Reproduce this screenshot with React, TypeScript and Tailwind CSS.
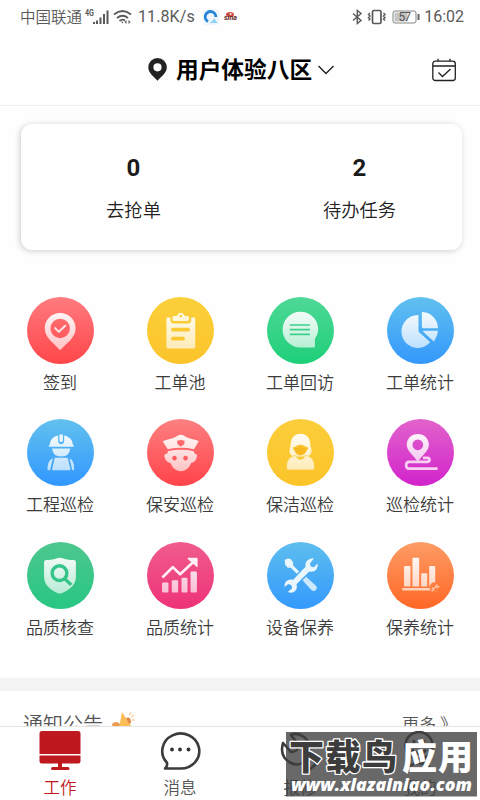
import type { ReactNode } from "react";

type Entry = {
  label: string;
  from: string;
  to: string;
  icon: ReactNode;
};

// Icons are drawn on a 200x200 grid, "url(#shine)" is the shared white fade
const entries: Entry[] = [
  {
    label: "签到",
    from: "#ff7b7f",
    to: "#ff4649",
    icon: (
      <>
        <path
          fill="url(#shine)"
          fillRule="evenodd"
          d="M99 48c-26 0-46 20-46 46 0 29 32 48 42 61q4 5 8 0c10-13 42-32 42-61 0-26-20-46-46-46zM99 65a29 29 0 1 1 0 58a29 29 0 1 1 0-58z"
        />
        <path d="M84 93l11 11 19-18" fill="none" stroke="#ffe3e4" strokeWidth="6" strokeLinecap="round" strokeLinejoin="round" />
      </>
    ),
  },
  {
    label: "工单池",
    from: "#fbd03a",
    to: "#fbc32a",
    icon: (
      <>
        <path
          fill="url(#shine)"
          fillRule="evenodd"
          d="M61 61h9v8q0 10 10 10h42q10 0 10-10v-8h9q3 0 3 4v85q0 4-4 4H62q-4 0-4-4V65q0-4 3-4zM77 92q-5 0-5 5.500t5 5.500h46q5 0 5-5.500t-5-5.500zM77 119q-5 0-5 5.500t5 5.500h31q5 0 5-5.500t-5-5.500z"
        />
        <path
          fill="#fff6dc"
          fillRule="evenodd"
          d="M80 57h7q3 0 4-3q3-7 10-7t10 7q1 3 4 3h7q3 0 3 3v7q0 5-5 5H81q-5 0-5-5v-7q0-3 4-3zM101 53a4 4 0 1 0 .1 0z"
        />
      </>
    ),
  },
  {
    label: "工单回访",
    from: "#4fd897",
    to: "#1ecf78",
    icon: (
      <>
        <path fill="url(#shine)" d="M98 44a53 53 0 0 1 53 53q0 14-10 28v22q0 4-4 4H98a53.500 53.500 0 0 1 0-107z" transform="translate(2 0)" />
        <path d="M68 83.500h60M68 97.500h60M68 111.500h60" stroke="#3ecf8c" strokeWidth="5" />
      </>
    ),
  },
  {
    label: "工单统计",
    from: "#61c0ef",
    to: "#3398fc",
    icon: (
      <g fill="url(#shine)">
        <path d="M94 54v46q0 3 2 5l33 30A49 49 0 1 1 94 54z" />
        <path d="M106 45a48 48 0 0 1 46 48h-44q-4 0-4-4V47q0-2 2-2z" />
        <path d="M109 101h41q2 0 2 3q-2 14-11 27q-1 2-3 0l-30-27q-2-3 1-3z" />
      </g>
    ),
  },
  {
    label: "工程巡检",
    from: "#62c1ee",
    to: "#3197ff",
    icon: (
      <g fill="url(#shine)">
        <path d="M68 77c1-14 9-25 25-28v17q0 9 9 9t9-9V49c16 3 25 14 26 28q3 0 3 3t-3 3H68q-3 0-3-3t3-3z" />
        <path d="M97 46h10v19q0 4-5 4t-5-4z" />
        <path d="M75 88h54q-2 24-27 24T75 88z" />
        <path d="M83 116h38l9 33q1 4-4 4H79q-5 0-4-4z" />
        <path d="M77 117l-8 36h-4q-4 0-4-4q0-25 16-32zM127 117l8 36h2q4 0 4-4q0-25-14-32z" />
      </g>
    ),
  },
  {
    label: "保安巡检",
    from: "#fd8081",
    to: "#ff4349",
    icon: (
      <g fill="url(#shine)">
        <path
          fillRule="evenodd"
          d="M101 47q5 0 11 4 8 6 16 7 12 2 24 7 3 1 1 4l-13 21q-39-8-78 0L48 69q-1-3 2-4 12-5 24-7 8-1 16-7 6-4 11-4zM90 64v8q0 5 11 10q11-5 11-10v-8q-5 1-11-2q-6 3-11 2z"
        />
        <path
          fillRule="evenodd"
          d="M62 96q39-8 78 0l1 7q9 0 8 9-3 17-17 19-11 25-31 25t-31-25q-14-2-18-19-1-9 9-9zM82 110a7 7 0 1 0 .1 0zM115 110a7 7 0 1 0 .1 0z"
        />
      </g>
    ),
  },
  {
    label: "保洁巡检",
    from: "#fbce3b",
    to: "#fbc429",
    icon: (
      <>
        <path
          fill="url(#shine)"
          d="M100 44c18 0 29 13 29 30q0 8 3 14 2 6 0 13-2 9-13 11H81q-11-2-13-11-2-7 0-13 3-6 3-14c0-17 11-30 29-30z"
        />
        <path d="M77 85q8-1 14-7 9-3 18 0 7 6 15 7-2 5-6 10-6 14-18 14t-18-14q-5-5-5-10z" fill="#fbc42f" />
        <path d="M83 86q5 2 7 0 10-6 20 0 4 2 7 0v5q0 13-17 14-17-1-17-14z" fill="#f7b820" />
        <path fill="url(#shine)" stroke="#fbc830" strokeWidth="2" d="M79 110h10q-1 10 11 10t11-10h11q20 6 20 35 0 7-5 7H63q-5 0-5-7 0-29 21-35z" />
      </>
    ),
  },
  {
    label: "巡检统计",
    from: "#e263cb",
    to: "#d123cb",
    icon: (
      <>
        <path
          fill="url(#shine)"
          fillRule="evenodd"
          d="M92 45c-19 0-33 14-33 32 0 19 21 32 29 46q4 5 8 0c8-14 29-27 29-46 0-18-14-32-33-32zM92 61a16 16 0 1 1 0 32a16 16 0 1 1 0-32z"
        />
        <path
          d="M107 116h13q7 0 7 6t-7 6H66q-9 0-9 10t9 10h85"
          fill="none"
          stroke="#f7cff2"
          strokeWidth="8"
        />
      </>
    ),
  },
  {
    label: "品质核查",
    from: "#4ec78f",
    to: "#27c683",
    icon: (
      <>
        <path fill="url(#shine)" d="M98 47q6 0 13 3t28 4q7 0 7 6v43q0 32-41 49q-7 3-14 0q-40-17-40-49V60q0-6 7-6 20-1 27-4t13-3z" />
        <circle cx="97" cy="93" r="22" fill="none" stroke="#35c489" strokeWidth="10" />
        <path d="M112 109l20 19" stroke="#35c489" strokeWidth="10" />
      </>
    ),
  },
  {
    label: "品质统计",
    from: "#f05c8e",
    to: "#ee3278",
    icon: (
      <>
        <path d="M46 106l31-31 22 21 39-36" fill="none" stroke="#fff0f5" strokeWidth="8" strokeLinejoin="round" />
        <path d="M121 50q-1-3 3-3h24q3 0 3 3v23q0 4-3 1z" fill="#fff0f5" />
        <g fill="url(#shine)">
          <rect x="45" y="121" width="19" height="30" rx="3" />
          <rect x="74" y="114" width="19" height="37" rx="3" />
          <rect x="103" y="107" width="18" height="44" rx="3" />
          <rect x="130" y="88" width="19" height="63" rx="3" />
        </g>
      </>
    ),
  },
  {
    label: "设备保养",
    from: "#5ebeee",
    to: "#3399fd",
    icon: (
      <>
        <path d="M53 54l8-5 10 2 7 10 0 9 18 18-7 7-18-18-9 0-8-9z" fill="#eaf6fe" />
        <path d="M106 114l11-10 30 27q5 6-1 12t-13 1z" fill="#cce8fd" />
        <path
          d="M140 49q-9-2-18 5t-7 20L78 113q-14-3-22 6-5 8-4 15l12-9 9 4 2 9-13 11q14 6 22-3 8-8 4-20l38-38q14 3 22-7 5-8 3-17l-11 11-9-2-3-9z"
          fill="#eaf6fe"
        />
      </>
    ),
  },
  {
    label: "保养统计",
    from: "#fd9c66",
    to: "#ff6725",
    icon: (
      <>
        <g fill="url(#shine)">
          <rect x="51" y="72" width="19" height="61" rx="2" />
          <rect x="76" y="47" width="20" height="86" rx="2" />
          <rect x="102" y="93" width="18" height="40" rx="2" />
          <rect x="126" y="72" width="18" height="61" rx="2" />
        </g>
        <rect x="45" y="137" width="90" height="8" rx="4" fill="#ffd2b9" />
        <circle cx="142" cy="135" r="15" fill="#ff7e42" />
        <path d="M137 141l11-9M150 127l-3 5 4 3 5-3M134 137l5 3-1 5-5 1" fill="none" stroke="#ffd2b9" strokeWidth="3.500" />
      </>
    ),
  },
];

function StatusBar() {
  return (
    <div className="flex h-[34px] items-center pl-5 pr-4 text-[#5a5a5a]">
      <span className="text-[15.500px] leading-none font-[350]">中国联通</span>
      <svg className="ml-[3px] h-5 w-[25px]" viewBox="0 0 25 20" fill="currentColor">
        <text x="0" y="8.500" fontSize="9" fontWeight="700" fontFamily="Roboto" textLength="9" lengthAdjust="spacingAndGlyphs">4G</text>
        <path d="M8 15h2v2H8zM11 13.500h2V17h-2zM14.500 10.500h2V17h-2zM18 7h2v10h-2zM21.500 3.500h2V17h-2z" />
      </svg>
      <svg className="ml-[3px] h-5 w-5" viewBox="0 0 20 20" fill="none" stroke="currentColor" strokeWidth="1.700">
        <path d="M1 7.500q8.500-7 17 0M4 11q5.500-4.500 11 0M6.500 14q3-2.500 5.500-.5" />
        <path d="M8 14.500l1.500 2 1-1.500z" fill="currentColor" stroke="none" />
        <path d="M13.500 13l-2 2 2 2zM15.500 13l2 2-2 2z" fill="currentColor" stroke="none" />
      </svg>
      <span className="ml-[5px] font-[Roboto] text-[16px] leading-none tracking-[0.100px]">11.8K/s</span>
      <svg className="ml-[8px] h-4 w-4" viewBox="0 0 16 16">
        <rect width="16" height="16" rx="4" fill="#eef5fc" />
        <path d="M5 12.500A5.300 5.300 0 1 1 12.800 8" fill="none" stroke="#2384d8" strokeWidth="2.800" />
        <path d="M7 13q3 0 4-4l3.500 5H7z" fill="#8bd4f7" />
      </svg>
      <svg className="ml-[4px] h-4 w-4" viewBox="0 0 16 16">
        <ellipse cx="7" cy="5.500" rx="4" ry="2.600" fill="#d54a3f" />
        <circle cx="7.500" cy="5" r="1" fill="#fff" />
        <text x="1" y="11" fontSize="7" fontStyle="italic" fontWeight="700" fontFamily="Roboto" textLength="13" lengthAdjust="spacingAndGlyphs" fill="#5b2722">sina</text>
      </svg>
      <div className="flex-1" />
      <svg className="h-4 w-[11px]" viewBox="0 0 11 16" fill="none" stroke="currentColor" strokeWidth="1.400">
        <path d="M1 4.500l8 7-3.700 3V1.500L9 4.500l-8 7" />
      </svg>
      <svg className="ml-[4px] h-4 w-5" viewBox="0 0 20 16" fill="none" stroke="currentColor">
        <rect x="5.500" y="1.500" width="8.500" height="13" rx="1.500" strokeWidth="1.700" />
        <path d="M3 4L1.500 5.500 3 7 1.500 8.500 3 10l-1.500 1.500M16.500 4L18 5.500 16.500 7 18 8.500 16.500 10l1.500 1.500" strokeWidth="1.400" />
      </svg>
      <svg className="ml-[5px] h-4 w-7" viewBox="0 0 28 16">
        <rect x="1" y="2" width="23" height="12" rx="2" fill="#fff" stroke="#858585" />
        <rect x="2.500" y="3.500" width="13" height="9" fill="#c4c4c4" />
        <path d="M26.500 5v6" stroke="#666" strokeWidth="2" />
        <text x="6.500" y="12.300" fontSize="12" fontFamily="Roboto" textLength="12.500" fill="#555">57</text>
      </svg>
      <span className="ml-[4px] font-[Roboto] text-[16px] leading-none">16:02</span>
    </div>
  );
}

function Header() {
  return (
    <header className="grid h-[72px] grid-cols-[148px_1fr_48px] items-center border-b border-[#eeeeee]">
      <div />
      <div className="flex items-center">
        <svg className="h-[23px] w-[19px]" viewBox="0 0 19 23">
          <path fill="#222" fillRule="evenodd" d="M9.500 0A9.300 9.300 0 0 0 .3 9.400c0 5.500 5.700 9.100 9.200 13.400 3.500-4.300 9.300-7.900 9.300-13.400A9.300 9.300 0 0 0 9.500 0zm0 5.200a4.100 4.100 0 1 1 0 8.200 4.100 4.100 0 0 1 0-8.200z" />
        </svg>
        <h1 className="ml-[9px] text-[22.700px] leading-none font-bold text-black">用户体验八区</h1>
        <svg className="ml-[5px] h-[10px] w-[18px]" viewBox="0 0 18 10" fill="none" stroke="#222" strokeWidth="1.400">
          <path d="M1.500 1L9 8.500 16.500 1" />
        </svg>
      </div>
      <svg className="h-6 w-6" viewBox="0 0 24 24" fill="none" stroke="#222" strokeWidth="1.300">
        <rect x=".8" y="3.200" width="22.500" height="19.300" rx="2.500" />
        <path d="M1 8h22M6 .8v2.500M18 .8v2.500M6.500 14.500l4 4 8-7.500" />
      </svg>
    </header>
  );
}

function Summary() {
  return (
    <section className="mr-[18px] ml-[21px] mt-[18px] flex h-[126px] rounded-[11px] bg-white shadow-[-1px_1px_6px_rgba(0,0,0,0.200)]">
      <div className="flex w-[225px] flex-col items-center pt-[30px]">
        <span className="font-[Roboto] text-[24px] leading-[28px] font-bold text-[#1a1a1a]">0</span>
        <span className="mt-[15px] text-[18.300px] leading-6 font-[350] text-[#222]">去抢单</span>
      </div>
      <div className="flex flex-1 flex-col items-center pt-[30px] pl-[11px]">
        <span className="font-[Roboto] text-[24px] leading-[28px] font-bold text-[#1a1a1a]">2</span>
        <span className="mt-[15px] text-[18.300px] leading-6 font-[350] text-[#222]">待办任务</span>
      </div>
    </section>
  );
}

function MenuItem({ entry, index }: { entry: Entry; index: number }) {
  const id = `disc-${index}`;
  return (
    <div className="flex flex-col items-center">
      <svg className="h-[67px] w-[67px]" viewBox="0 0 200 200">
        <defs>
          <linearGradient id={id} x1="0" y1="0" x2="0" y2="1">
            <stop offset="0" stopColor={entry.from} />
            <stop offset="1" stopColor={entry.to} />
          </linearGradient>
        </defs>
        <circle cx="100" cy="100" r="100" fill={`url(#${id})`} />
        {entry.icon}
      </svg>
      <span className="mt-[6px] text-[17px] leading-6 font-[350] text-[#3c3c3c]">{entry.label}</span>
    </div>
  );
}

function Menu() {
  return (
    <section className="mt-[46.500px] grid grid-cols-4 auto-rows-[122.500px]">
      {entries.map((entry, i) => (
        <MenuItem key={entry.label} entry={entry} index={i} />
      ))}
    </section>
  );
}

function Notice() {
  return (
    <section className="flex h-[35px] shrink-0 items-start overflow-hidden pl-[23px] pr-[28px] text-[#555]">
      <span className="mt-[19px] text-[20px] leading-7 font-[350]">通知公告</span>
      <svg className="mt-[19px] ml-[8px] h-6 w-6" viewBox="0 0 24 24">
        <path d="M1 14q4-4 8 0l2 9H3z" fill="#ee9b4e" />
        <path d="M11 2l9 14-13 8Q9 13 11 2z" fill="#fbbd55" />
        <path d="M15 8q5-2 5 5l-2 1z" fill="#e08a48" />
        <path d="M18.500 5l1-2.500M20.500 7l2.500-2M21 10h2.500" stroke="#f5b45c" strokeWidth="1" />
      </svg>
      <span className="mt-[21px] ml-auto text-[17px] leading-6 font-[350]">更多</span>
      <span className="mt-[21px] ml-[4px] w-3 text-[17px] leading-6 font-[350]">》</span>
    </section>
  );
}

function TabBar() {
  return (
    <nav className="grid h-[74px] grid-cols-4 border-t border-[#e4e4e4] bg-white text-[16.500px] leading-6 font-[350] text-[#555]">
      <div className="flex flex-col items-center pt-[4px] text-[#bf1920]">
        <svg className="h-[40px] w-[42px]" viewBox="0 0 42 40" fill="currentColor">
          <path d="M3 0h36q2.500 0 2.500 2.500V23H.5V2.500Q.5 0 3 0zM.5 24.500h41V30q0 2.500-2.500 2.500H23V36h6q1.500 0 1.500 1.500T29 39H13.500q-1.500 0-1.500-1.500t1.500-1.500H19v-3.500H3Q.5 32.500.5 30z" />
        </svg>
        <span className="mt-[4px]">工作</span>
      </div>
      <div className="flex flex-col items-center pt-[4px]">
        <svg className="h-[40px] w-[42px]" viewBox="0 0 42 40">
          <path d="M6 37.500q3-2.500 1.800-6A18.500 17.500 0 1 1 21 37.500z" fill="none" stroke="#3c3c3c" strokeWidth="2.600" strokeLinejoin="round" />
          <g fill="#333">
            <circle cx="13" cy="18.500" r="1.900" />
            <circle cx="21" cy="18.500" r="1.900" />
            <circle cx="29.500" cy="18.500" r="1.900" />
          </g>
        </svg>
        <span className="mt-[4px]">消息</span>
      </div>
      <div className="flex flex-col items-center pt-[4px]">
        <svg className="h-[40px] w-[42px]" viewBox="0 0 42 40" fill="none" stroke="#3c3c3c" strokeWidth="2.600">
          <path d="M4 12Q0 26 12 32q6 3 11 0l7 7 7-6-8-9q4-12-4-18-7-5-13-2l7 9q1 8-7 8z" strokeLinejoin="round" />
        </svg>
        <span className="mt-[4px]">报修</span>
      </div>
      <div className="flex flex-col items-center pt-[4px]">
        <svg className="h-[40px] w-[42px]" viewBox="0 0 42 40" fill="none" stroke="#3c3c3c" strokeWidth="2.600">
          <circle cx="20" cy="14.500" r="13.500" />
          <path d="M15 9v5M25 9v5M13 19q7 7 14 0M9 36q11-8 22 0" />
        </svg>
        <span className="mt-[4px]">我的</span>
      </div>
    </nav>
  );
}

function Stamp() {
  return (
    <svg className="absolute left-[286px] top-[732px] h-[65px] w-[191px]" viewBox="0 0 191 65">
      <rect width="191" height="64.500" fill="#3d3d3d" fillOpacity="0.780" />
      <g fontFamily="'Noto Sans CJK SC', sans-serif" fontWeight="900" fontSize="35" strokeLinejoin="round">
        <text x="3" y="38" textLength="108" fill="#3d3d3d" stroke="#fff" strokeWidth="2.600" paintOrder="stroke">下载鸟</text>
        <text x="116" y="38" textLength="71" fill="#fff">应用</text>
      </g>
      <text x="5" y="58.500" textLength="181" lengthAdjust="spacingAndGlyphs" fontFamily="'Open Sans', sans-serif" fontWeight="800" fontStyle="italic" fontSize="17.500" fill="#fff">
        www.xlazainiao.com
      </text>
    </svg>
  );
}

export default function App() {
  return (
    <div className="relative flex h-[800px] w-[480px] flex-col overflow-hidden bg-[#fefefe] font-['Noto_Sans_CJK_SC',sans-serif]">
      <svg className="absolute h-0 w-0">
        <defs>
          <linearGradient id="shine" gradientUnits="userSpaceOnUse" x1="0" y1="45" x2="0" y2="155">
            <stop offset="0" stopColor="#fff" stopOpacity="0.930" />
            <stop offset="1" stopColor="#fff" stopOpacity="0.650" />
          </linearGradient>
        </defs>
      </svg>
      <StatusBar />
      <Header />
      <Summary />
      <Menu />
      <div className="mt-auto h-[13.500px] shrink-0 bg-[#f3f3f3]" />
      <Notice />
      <TabBar />
      <Stamp />
    </div>
  );
}
